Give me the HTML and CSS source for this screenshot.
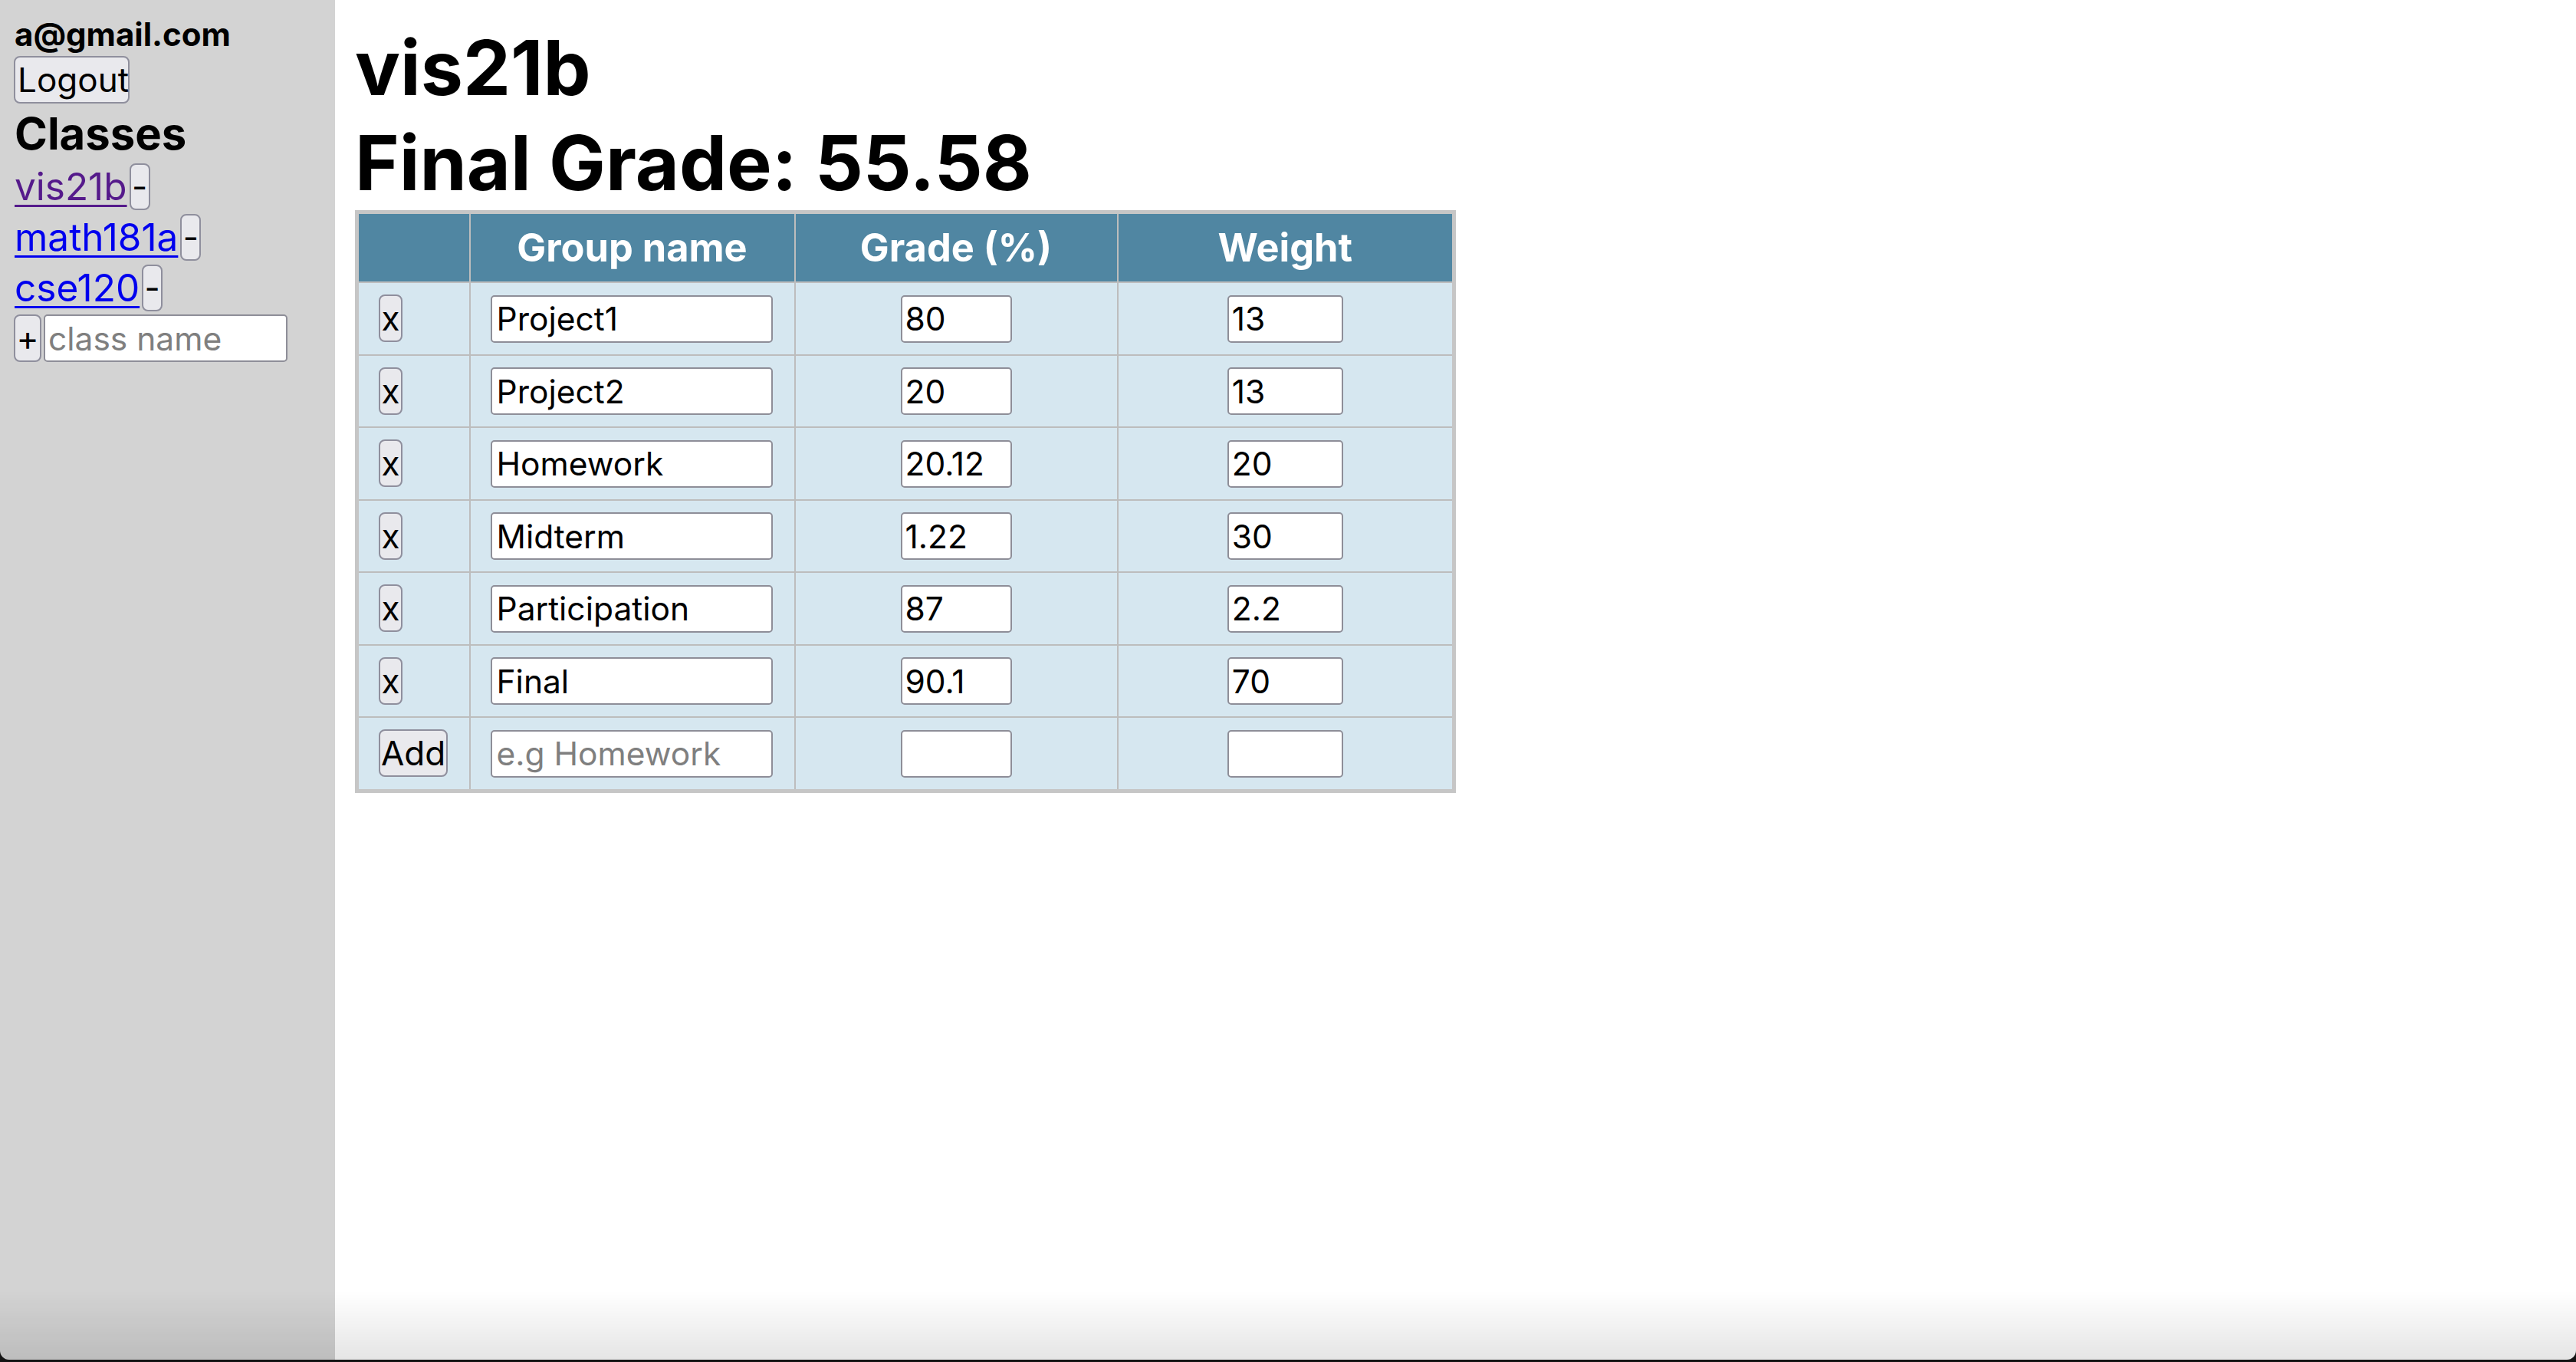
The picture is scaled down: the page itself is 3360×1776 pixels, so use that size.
FILE: index.html
```html
<!DOCTYPE html>
<html lang="en">
<head>
<meta charset="utf-8">
<title>Grades</title>
<link rel="stylesheet" href="styles.css">
</head>
<body>
<div class="app">
  <aside class="sidebar">
    <div class="email">a@gmail.com</div>
    <button class="btn logout">Logout</button>
    <h3 class="classes-title">Classes</h3>
    <div class="class-row"><a class="class-link visited" href="#">vis21b</a><button class="btn small">-</button></div>
    <div class="class-row"><a class="class-link" href="#">math181a</a><button class="btn small">-</button></div>
    <div class="class-row"><a class="class-link" href="#">cse120</a><button class="btn small">-</button></div>
    <div class="class-row"><button class="btn plus">+</button><input class="field class-input" placeholder="class name"></div>
  </aside>
  <main class="main">
    <h1 class="title">vis21b<br>Final Grade: 55.58</h1>
    <table class="grades">
      <thead>
        <tr>
          <th class="c-del"></th>
          <th class="c-name">Group name</th>
          <th class="c-grade">Grade (%)</th>
          <th class="c-weight">Weight</th>
        </tr>
      </thead>
      <tbody>
        <tr>
          <td class="c-del"><button class="btn x">x</button></td>
          <td class="c-name"><input class="field name" value="Project1"></td>
          <td class="c-grade"><input class="field grade" value="80"></td>
          <td class="c-weight"><input class="field weight" value="13"></td>
        </tr>
        <tr>
          <td class="c-del"><button class="btn x">x</button></td>
          <td class="c-name"><input class="field name" value="Project2"></td>
          <td class="c-grade"><input class="field grade" value="20"></td>
          <td class="c-weight"><input class="field weight" value="13"></td>
        </tr>
        <tr>
          <td class="c-del"><button class="btn x">x</button></td>
          <td class="c-name"><input class="field name" value="Homework"></td>
          <td class="c-grade"><input class="field grade" value="20.12"></td>
          <td class="c-weight"><input class="field weight" value="20"></td>
        </tr>
        <tr>
          <td class="c-del"><button class="btn x">x</button></td>
          <td class="c-name"><input class="field name" value="Midterm"></td>
          <td class="c-grade"><input class="field grade" value="1.22"></td>
          <td class="c-weight"><input class="field weight" value="30"></td>
        </tr>
        <tr>
          <td class="c-del"><button class="btn x">x</button></td>
          <td class="c-name"><input class="field name" value="Participation"></td>
          <td class="c-grade"><input class="field grade" value="87"></td>
          <td class="c-weight"><input class="field weight" value="2.2"></td>
        </tr>
        <tr>
          <td class="c-del"><button class="btn x">x</button></td>
          <td class="c-name"><input class="field name" value="Final"></td>
          <td class="c-grade"><input class="field grade" value="90.1"></td>
          <td class="c-weight"><input class="field weight" value="70"></td>
        </tr>
        <tr>
          <td class="c-del"><button class="btn add">Add</button></td>
          <td class="c-name"><input class="field name" placeholder="e.g Homework"></td>
          <td class="c-grade"><input class="field grade"></td>
          <td class="c-weight"><input class="field weight"></td>
        </tr>
      </tbody>
    </table>
  </main>
</div>
<div class="window-edge"></div>
</body>
</html>
```
FILE: styles.css
```css
* { box-sizing: border-box; }

html, body {
  margin: 0;
  height: 100%;
}

body {
  font-family: "Inter", "Noto Sans", sans-serif;
  font-size: 49px;
  color: #000;
  background: #fff;
  overflow: hidden;
}

.app {
  display: flex;
  height: 100%;
}

.sidebar {
  width: 437px;
  flex: none;
  background: #d3d3d3;
  padding: 18px 0 0 18px;
}

.email {
  font-weight: 700;
  font-size: 42px;
  line-height: 53px;
  padding-left: 1px;
}

.btn {
  font-family: "Inter", "Noto Sans", sans-serif;
  font-size: 44px;
  line-height: 54px;
  height: 62px;
  padding: 0 3px;
  margin: 0;
  color: #000;
  background: #e9e9ed;
  border: 2px solid #8f8f9d;
  border-radius: 8px;
}

.logout {
  display: block;
  margin-top: 2px;
  width: 151px;
}

.classes-title {
  font-size: 58px;
  font-weight: 700;
  line-height: 71px;
  margin: 4px 0 0 1px;
}

.class-row {
  display: flex;
  align-items: center;
  height: 66px;
}

.class-link {
  color: #0000ee;
  text-decoration: underline;
  text-decoration-thickness: 3px;
  text-underline-offset: 6px;
  font-size: 49.5px;
  line-height: 59px;
  padding-left: 1px;
}

.class-link.visited { color: #551a8b; }

.small {
  width: 27px;
  height: 61px;
  margin-left: 3px;
  padding: 0;
}

.plus {
  width: 36px;
  padding: 0;
}

.field {
  font-family: "Inter", "Noto Sans", sans-serif;
  font-size: 42.5px;
  height: 62px;
  margin: 0;
  padding: 0 6px;
  border: 2px solid #8e8e98;
  border-radius: 5px;
  background: #fff;
  color: #000;
}

.field::placeholder { color: #7f7f7f; }

.class-input {
  width: 318px;
  margin-left: 3px;
  padding: 0 4px;
}

.main {
  flex: 1;
  padding: 27px 0 0 26px;
}

.title {
  font-size: 98.5px;
  font-weight: 700;
  line-height: 124px;
  margin: 0;
}

.grades {
  border-collapse: collapse;
  border: 5px solid #c6c6c6;
  table-layout: fixed;
  width: 1431px;
  margin-top: -1px;
}

.grades th,
.grades td {
  border: 2px solid #bdbdbd;
  padding: 15px 26px;
}

.grades th {
  background: #5086a2;
  color: #fff;
  font-size: 50.5px;
  font-weight: 700;
  line-height: 58px;
  padding: 15px 6px 15px;
  height: 90px;
}

.grades td {
  background: #d6e7f0;
  height: 94px;
}

.c-del { width: 147px; }
.c-name { width: 424px; }
.c-grade { width: 421px; }
.c-weight { width: 439px; }

td.c-del { text-align: left; }
td.c-grade, td.c-weight { text-align: center; }

.name { width: 368px; padding: 0 6px; }
.grade { width: 145px; padding: 0 4px; }
.weight { width: 151px; padding: 0 4px; }

.x { width: 31px; padding: 0; }
.add { width: 90px; padding: 0; }

.window-edge {
  position: fixed;
  left: 0;
  right: 0;
  bottom: 3px;
  height: 90px;
  border-radius: 0 0 12px 12px;
  background: linear-gradient(to bottom, rgba(0,0,0,0), rgba(0,0,0,0.1));
  box-shadow: 0 0 0 20px #141414;
  clip-path: inset(0 -30px -30px -30px);
  pointer-events: none;
}
```
